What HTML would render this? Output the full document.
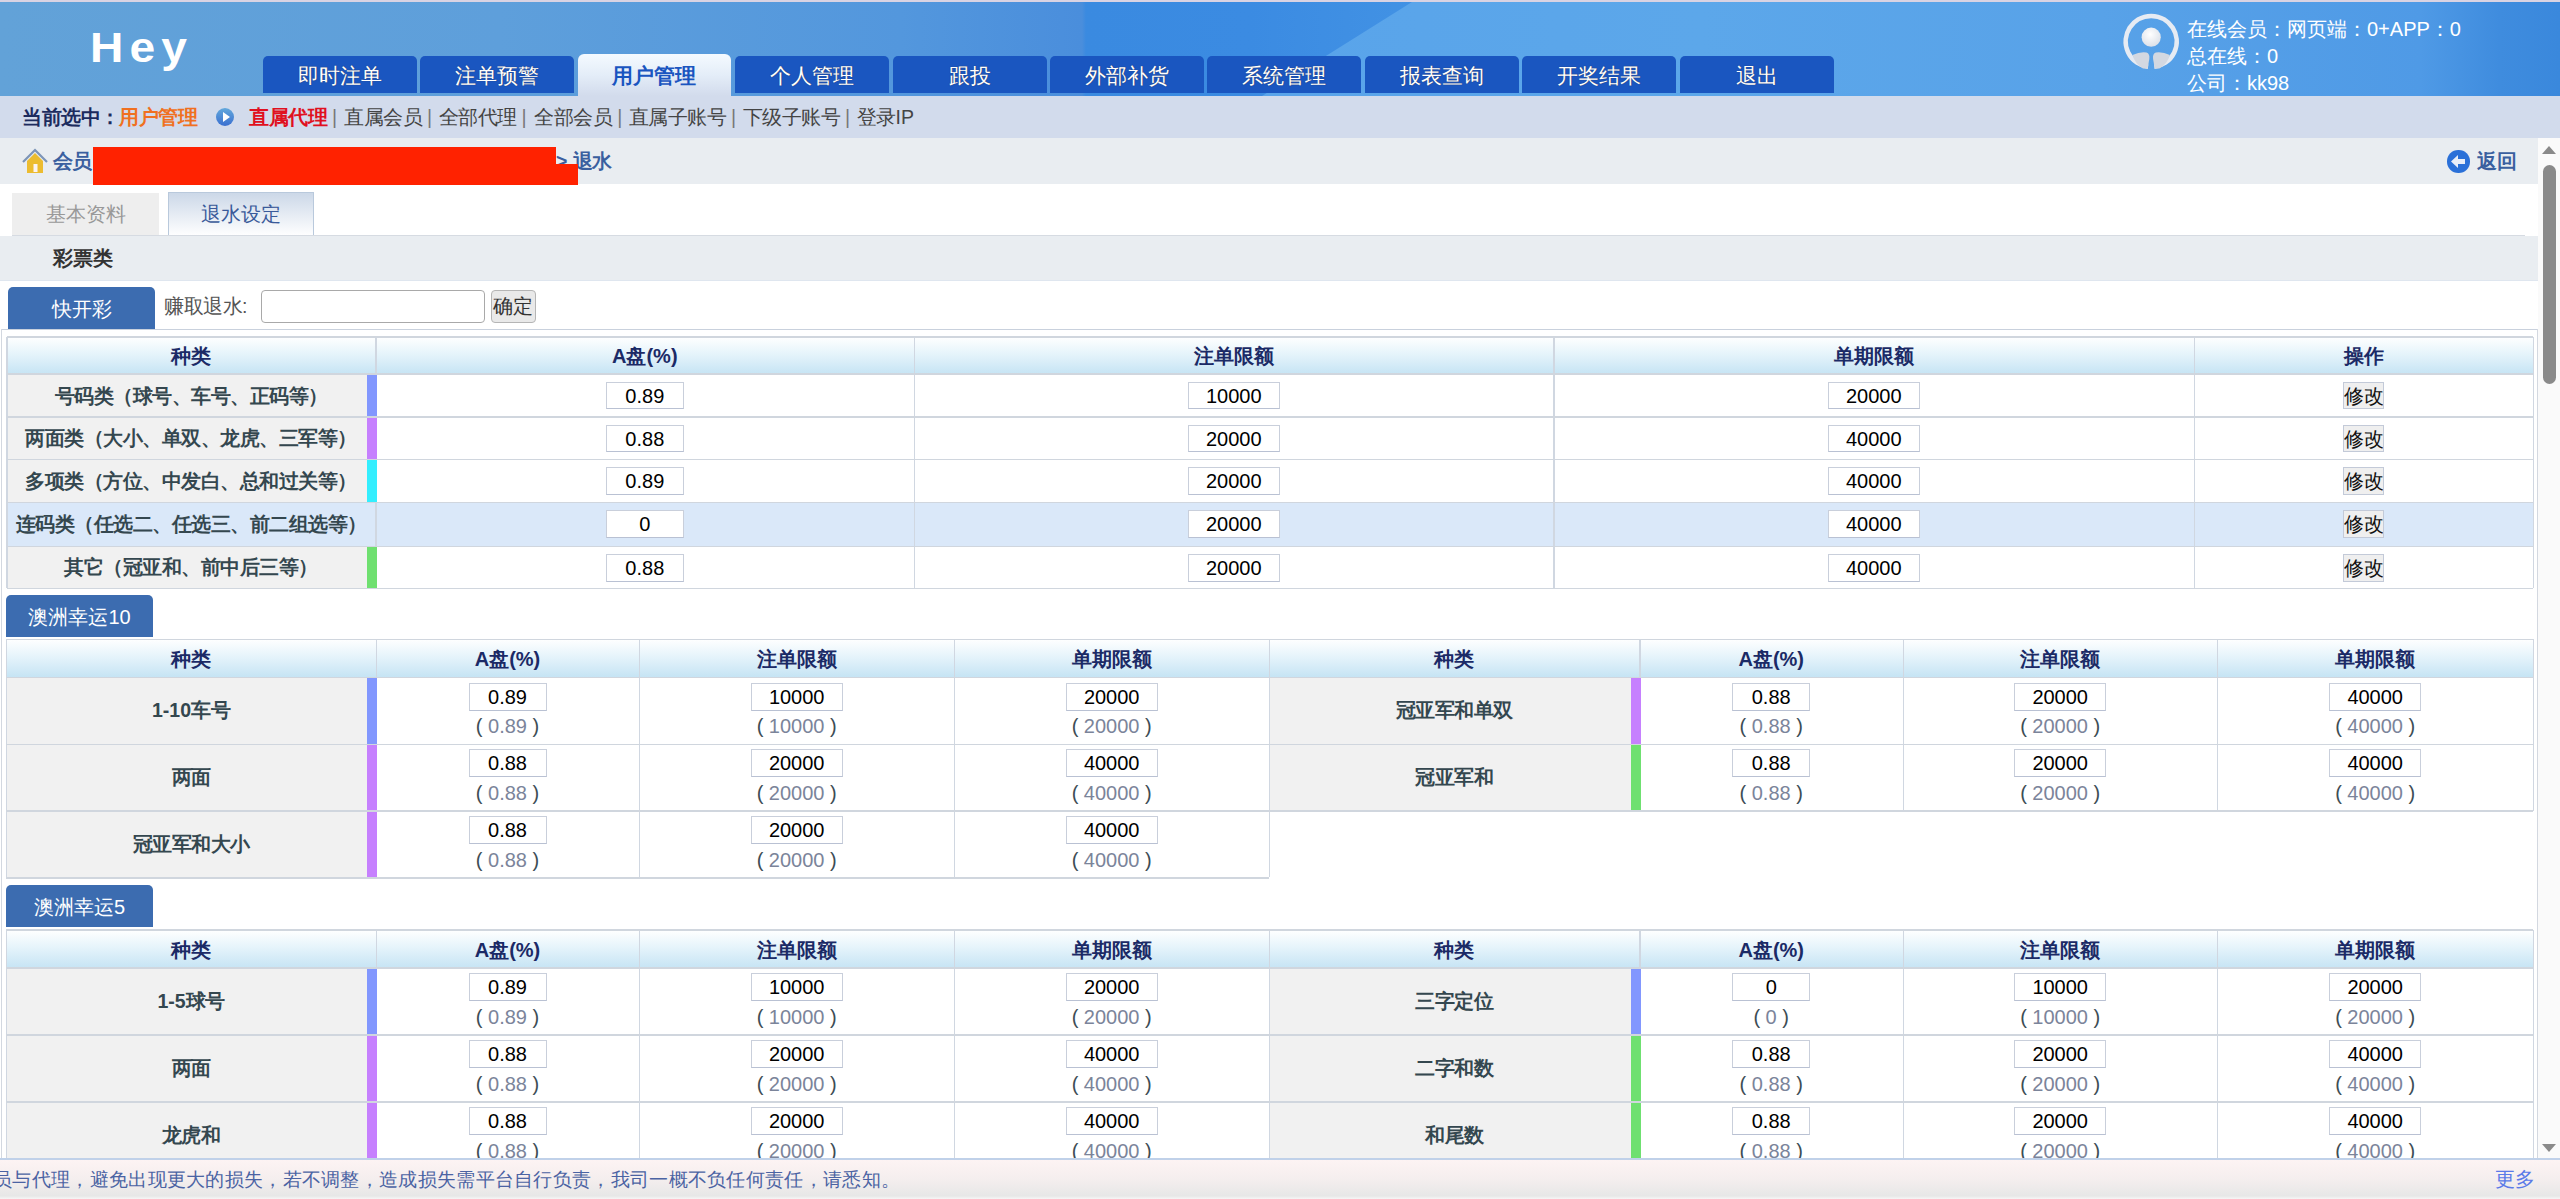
<!DOCTYPE html><html><head><meta charset="utf-8"><title>退水设定</title><style>
*{margin:0;padding:0;box-sizing:border-box}
html,body{width:2560px;height:1199px;overflow:hidden;background:#fff}
body{position:relative;font-family:"Liberation Sans",sans-serif;font-size:20px;color:#333}
div{position:absolute}
em{font-style:normal;display:inline-block;width:1em;text-align:center}
.nocjk em{-webkit-text-fill-color:transparent;text-shadow:none;position:relative}
.nocjk em:after{content:"";position:absolute;left:.09em;right:.09em;top:50%;height:.82em;margin-top:-.43em;background:currentColor;opacity:.45}
.nocjk .b em:after,.nocjk .th em:after,.nocjk .ct em:after{opacity:.72}
.nocjk em.p:after{display:none}
.c{text-align:center;white-space:nowrap}
.b{font-weight:bold}
.tab{background:#1a56c0;border-radius:5px 5px 0 0;color:#fff;text-align:center;line-height:40px;font-size:21px;text-shadow:0 0 1px #334}
.hd{background:linear-gradient(#ffffff 0%,#e6f4fb 45%,#c6e4f4 100%)}
.th{color:#1b2a66;font-weight:bold;text-align:center;white-space:nowrap}
.cat{background:#f1f1f1}
.ct{color:#34474f;font-weight:bold;text-align:center;white-space:nowrap}
.inp{background:#fff;border:1px solid #c9cfdb;border-bottom-color:#b9c1d3;color:#000;text-align:center;white-space:nowrap}
.sub{color:#7b849a;text-align:center;white-space:nowrap}
.sub i{font-style:normal;color:#3d4d55}
.vl{background:#d0d7e1}
.hl{background:#d0d6de}
.btn{background:#3c6cb0;border-radius:5px 5px 0 0;color:#fff;text-align:center;white-space:nowrap}
</style></head><body>
<div style="left:0.0px;top:0.0px;width:2560.0px;height:2.0px;background:#d9d3e3"></div>
<div style="left:0.0px;top:2.0px;width:2560.0px;height:94.0px;background:linear-gradient(90deg,#62a2d8 0px,#5e9fdb 500px,#5397dd 900px,#4a8edc 1082px,#3a8ae0 1086px,#3b8be2 1250px,#4292e4 1419px)"></div>
<div style="left:0.0px;top:2.0px;width:2560.0px;height:94.0px;clip-path:polygon(1412px 0,100% 0,100% 100%,1262px 100%);background:linear-gradient(90deg,#59a4ea 1280px,#5ca7ea 1700px,#58a2e8 2100px,#4f9ae6 2420px,#3f8cde 2500px,#3a88dc 2560px)"></div>
<div style="left:89.6px;top:23px;font-size:42px;font-weight:bold;color:#fff;letter-spacing:5.5px;line-height:50px;transform:scaleX(1.1);transform-origin:0 0">Hey</div>
<div class="tab" style="left:263.0px;top:55.5px;width:154px;height:37.5px"><em>即</em><em>时</em><em>注</em><em>单</em></div>
<div class="tab" style="left:420.4px;top:55.5px;width:154px;height:37.5px"><em>注</em><em>单</em><em>预</em><em>警</em></div>
<div style="left:577.8px;top:54px;width:153px;height:42px;border-radius:6px 6px 0 0;background:linear-gradient(#f4faff 0%,#e4edf8 50%,#d2dbec 100%);color:#1a55c0;font-weight:bold;text-align:center;line-height:44px;font-size:21px"><em>用</em><em>户</em><em>管</em><em>理</em></div>
<div class="tab" style="left:735.2px;top:55.5px;width:154px;height:37.5px"><em>个</em><em>人</em><em>管</em><em>理</em></div>
<div class="tab" style="left:892.6px;top:55.5px;width:154px;height:37.5px"><em>跟</em><em>投</em></div>
<div class="tab" style="left:1050.0px;top:55.5px;width:154px;height:37.5px"><em>外</em><em>部</em><em>补</em><em>货</em></div>
<div class="tab" style="left:1207.4px;top:55.5px;width:154px;height:37.5px"><em>系</em><em>统</em><em>管</em><em>理</em></div>
<div class="tab" style="left:1364.8px;top:55.5px;width:154px;height:37.5px"><em>报</em><em>表</em><em>查</em><em>询</em></div>
<div class="tab" style="left:1522.2px;top:55.5px;width:154px;height:37.5px"><em>开</em><em>奖</em><em>结</em><em>果</em></div>
<div class="tab" style="left:1679.6px;top:55.5px;width:154px;height:37.5px"><em>退</em><em>出</em></div>
<svg style="position:absolute;left:2115px;top:8px" width="72" height="72" viewBox="0 0 72 72"><defs><radialGradient id="hg" cx="45%" cy="35%" r="70%"><stop offset="0" stop-color="#ffffff"/><stop offset="1" stop-color="#d9dee7"/></radialGradient></defs><path d="M33.1 58.8 A25.5 25.5 0 1 1 39.3 58.8" fill="none" stroke="#e6ebf3" stroke-width="4.6"/><circle cx="36.2" cy="29.2" r="9.6" fill="url(#hg)"/><path d="M17.5 47 Q25 43.5 31.5 44.5 Q35 45.5 34.3 51 Q33.5 56 32.5 60.7 L28 60.5 Q20 56 17.5 47 Z" fill="#d3d8e1"/><path d="M54.9 47 Q47.4 43.5 40.9 44.5 Q37.4 45.5 38.1 51 Q38.9 56 39.9 60.7 L44.4 60.5 Q52.4 56 54.9 47 Z" fill="#d3d8e1"/></svg>
<div style="left:2187px;top:16px;color:#fff;font-size:20px;line-height:27px;white-space:nowrap"><em>在</em><em>线</em><em>会</em><em>员</em><em class="p">：</em><em>网</em><em>页</em><em>端</em><em class="p">：</em>0+APP<em class="p">：</em>0<br><em>总</em><em>在</em><em>线</em><em class="p">：</em>0<br><em>公</em><em>司</em><em class="p">：</em>kk98</div>
<div style="left:0.0px;top:96.0px;width:2560.0px;height:42.0px;background:#d2dbec"></div>
<div style="left:22px;top:96px;height:42px;line-height:42px;font-size:19.5px;white-space:nowrap;color:#555"><span style="color:#1c2b5e;font-weight:bold"><em>当</em><em>前</em><em>选</em><em>中</em><em class="p">：</em></span></div>
<div style="left:119px;top:96px;height:42px;line-height:42px;font-size:19.5px;white-space:nowrap;color:#f07020;font-weight:bold"><em>用</em><em>户</em><em>管</em><em>理</em></div>
<div style="left:215.5px;top:107.5px;width:18px;height:18px;border-radius:50%;background:linear-gradient(#62a8dc,#3a6fd0)"></div>
<div style="left:222.5px;top:111.5px;width:0;height:0;border-left:7px solid #fff;border-top:5px solid transparent;border-bottom:5px solid transparent"></div>
<div style="left:249px;top:96px;height:42px;line-height:42px;font-size:19.5px;white-space:nowrap;color:#e01020;font-weight:bold"><em>直</em><em>属</em><em>代</em><em>理</em></div>
<div style="left:332px;top:96px;height:42px;line-height:42px;font-size:19.5px;white-space:nowrap;color:#777">|</div>
<div style="left:344px;top:96px;height:42px;line-height:42px;font-size:19.5px;white-space:nowrap;color:#444"><em>直</em><em>属</em><em>会</em><em>员</em></div>
<div style="left:427px;top:96px;height:42px;line-height:42px;font-size:19.5px;white-space:nowrap;color:#777">|</div>
<div style="left:438.7px;top:96px;height:42px;line-height:42px;font-size:19.5px;white-space:nowrap;color:#444"><em>全</em><em>部</em><em>代</em><em>理</em></div>
<div style="left:521.6px;top:96px;height:42px;line-height:42px;font-size:19.5px;white-space:nowrap;color:#777">|</div>
<div style="left:534px;top:96px;height:42px;line-height:42px;font-size:19.5px;white-space:nowrap;color:#444"><em>全</em><em>部</em><em>会</em><em>员</em></div>
<div style="left:617.3px;top:96px;height:42px;line-height:42px;font-size:19.5px;white-space:nowrap;color:#777">|</div>
<div style="left:628.8px;top:96px;height:42px;line-height:42px;font-size:19.5px;white-space:nowrap;color:#444"><em>直</em><em>属</em><em>子</em><em>账</em><em>号</em></div>
<div style="left:731px;top:96px;height:42px;line-height:42px;font-size:19.5px;white-space:nowrap;color:#777">|</div>
<div style="left:742.6px;top:96px;height:42px;line-height:42px;font-size:19.5px;white-space:nowrap;color:#444"><em>下</em><em>级</em><em>子</em><em>账</em><em>号</em></div>
<div style="left:845px;top:96px;height:42px;line-height:42px;font-size:19.5px;white-space:nowrap;color:#777">|</div>
<div style="left:856.5px;top:96px;height:42px;line-height:42px;font-size:19.5px;white-space:nowrap;color:#444"><em>登</em><em>录</em>IP</div>
<div style="left:0.0px;top:138.0px;width:2538.0px;height:46.0px;background:#e9edf1"></div>
<svg style="position:absolute;left:22px;top:148px" width="26" height="27" viewBox="0 0 26 27"><polygon points="5,13 13,5 21,13 21,25 5,25" fill="#ecbc30"/><rect x="11.5" y="16" width="4" height="8" fill="#fbf3f3"/><polyline points="1,14 13,2 25,14" fill="none" stroke="#7d95b8" stroke-width="2.2"/></svg>
<div class="b" style="left:52.5px;top:138px;height:46px;line-height:46px;color:#3a5f9f;font-size:19.5px"><em>会</em><em>员</em></div>
<div class="b" style="left:556px;top:138px;height:46px;line-height:46px;color:#3a5f9f;font-size:19.5px;white-space:nowrap">&gt; <em>退</em><em>水</em></div>
<div style="left:92.5px;top:147.0px;width:463.5px;height:38.0px;background:#ff2200"></div>
<div style="left:556.0px;top:164.0px;width:22.0px;height:21.0px;background:#ff2200"></div>
<div style="left:2447px;top:150px;width:22.5px;height:22.5px;border-radius:50%;background:#2a70d8"></div>
<svg style="position:absolute;left:2447px;top:150px" width="23" height="23" viewBox="0 0 23 23"><polygon points="4,11.5 11,5 11,9 18,9 18,14 11,14 11,18" fill="#e8eef8"/></svg>
<div class="b" style="left:2477px;top:138px;height:46px;line-height:46px;color:#3a5f9f;font-size:19.5px"><em>返</em><em>回</em></div>
<div style="left:2538.0px;top:138.0px;width:22.0px;height:1020.0px;background:#fafafa"></div>
<div style="left:2541.5px;top:146px;width:0;height:0;border-left:7.5px solid transparent;border-right:7.5px solid transparent;border-bottom:8px solid #8a8a8a"></div>
<div style="left:2543.0px;top:165.0px;width:13.0px;height:219.0px;background:#8a8a8a;border-radius:7px"></div>
<div style="left:2541.5px;top:1144px;width:0;height:0;border-left:7.5px solid transparent;border-right:7.5px solid transparent;border-top:8px solid #8a8a8a"></div>
<div style="left:12.0px;top:192.5px;width:147.0px;height:42.5px;background:#eeeeee;color:#999;text-align:center;line-height:42px;font-size:20px"><em>基</em><em>本</em><em>资</em><em>料</em></div>
<div style="left:167.5px;top:192.0px;width:146.5px;height:44.0px;background:linear-gradient(#ccd8e8,#ffffff);border:1px solid #b9c9dc;border-bottom:none;color:#3a5a9a;text-align:center;line-height:42px;font-size:20px"><em>退</em><em>水</em><em>设</em><em>定</em></div>
<div style="left:12.0px;top:235.0px;width:2513.0px;height:1.0px;background:#d6dbe2"></div>
<div style="left:0.0px;top:236.0px;width:2538.0px;height:44.0px;background:#e9edf1"></div>
<div style="left:0.0px;top:280.0px;width:2538.0px;height:1.0px;background:#dfe6ef"></div>
<div class="b" style="left:52.5px;top:236px;height:44px;line-height:44px;color:#333;font-size:20px"><em>彩</em><em>票</em><em>类</em></div>
<div class="btn" style="left:8.0px;top:287.0px;width:147.0px;height:42.0px;line-height:44px;font-size:20px"><em>快</em><em>开</em><em>彩</em></div>
<div style="left:164px;top:290px;height:33px;line-height:33px;color:#555;font-size:19.5px;white-space:nowrap"><em>赚</em><em>取</em><em>退</em><em>水</em>:</div>
<div style="left:260.5px;top:290.0px;width:224.5px;height:32.5px;border:1.5px solid #a9a9a9;border-radius:4px;background:#fff"></div>
<div style="left:490.5px;top:290.0px;width:45.5px;height:32.5px;border:1.5px solid #b5b5b5;border-radius:4px;background:#e9e9e9;color:#333;text-align:center;line-height:30px;font-size:20px"><em>确</em><em>定</em></div>
<div style="left:0.5px;top:329.0px;width:2537.5px;height:1.0px;background:#c9d1dd"></div>
<div style="left:0.5px;top:329.0px;width:1.5px;height:829.0px;background:#d3d8e0"></div>
<div style="left:2536.5px;top:329.0px;width:1.5px;height:829.0px;background:#d3d8e0"></div>
<div class="hd" style="left:6.5px;top:336.5px;width:2526.5px;height:37.0px;"></div>
<div class="cat" style="left:6.5px;top:373.5px;width:369.1px;height:43.0px;"></div>
<div class="cat" style="left:6.5px;top:416.5px;width:369.1px;height:42.5px;"></div>
<div class="cat" style="left:6.5px;top:459.0px;width:369.1px;height:43.3px;"></div>
<div style="left:6.5px;top:502.3px;width:2526.5px;height:43.7px;background:#dae8f9"></div>
<div class="cat" style="left:6.5px;top:546.0px;width:369.1px;height:42.0px;"></div>
<div class="vl" style="left:6.0px;top:336.5px;width:1.5px;height:251.5px;"></div>
<div class="vl" style="left:375.1px;top:336.5px;width:1.5px;height:251.5px;"></div>
<div class="vl" style="left:913.5px;top:336.5px;width:1.5px;height:251.5px;"></div>
<div class="vl" style="left:1553.0px;top:336.5px;width:1.5px;height:251.5px;"></div>
<div class="vl" style="left:2193.5px;top:336.5px;width:1.5px;height:251.5px;"></div>
<div class="vl" style="left:2532.5px;top:336.5px;width:1.5px;height:251.5px;"></div>
<div style="left:366.6px;top:373.5px;width:10.0px;height:43.0px;background:#8297fe"></div>
<div style="left:366.6px;top:416.5px;width:10.0px;height:42.5px;background:#c680fe"></div>
<div style="left:366.6px;top:459.0px;width:10.0px;height:43.3px;background:#33eefe"></div>
<div style="left:366.6px;top:546.0px;width:10.0px;height:42.0px;background:#6fe070"></div>
<div class="hl" style="left:6.5px;top:336.0px;width:2526.5px;height:1.5px;"></div>
<div class="hl" style="left:6.5px;top:373.0px;width:2526.5px;height:1.5px;"></div>
<div class="hl" style="left:6.5px;top:416.0px;width:2526.5px;height:1.5px;"></div>
<div class="hl" style="left:6.5px;top:458.5px;width:2526.5px;height:1.5px;"></div>
<div class="hl" style="left:6.5px;top:501.8px;width:2526.5px;height:1.5px;"></div>
<div class="hl" style="left:6.5px;top:545.5px;width:2526.5px;height:1.5px;"></div>
<div class="hl" style="left:6.5px;top:587.5px;width:2526.5px;height:1.5px;"></div>
<div class="th" style="left:6.5px;top:336.5px;width:369.1px;height:37px;line-height:39px"><em>种</em><em>类</em></div>
<div class="th" style="left:375.6px;top:336.5px;width:538.4px;height:37px;line-height:39px">A<em>盘</em>(%)</div>
<div class="th" style="left:914.0px;top:336.5px;width:639.5px;height:37px;line-height:39px"><em>注</em><em>单</em><em>限</em><em>额</em></div>
<div class="th" style="left:1553.5px;top:336.5px;width:640.5px;height:37px;line-height:39px"><em>单</em><em>期</em><em>限</em><em>额</em></div>
<div class="th" style="left:2194.0px;top:336.5px;width:339.0px;height:37px;line-height:39px"><em>操</em><em>作</em></div>
<div class="ct" style="left:6.5px;top:373.5px;width:369.1px;height:43.0px;line-height:44.0px;font-size:19.5px"><em>号</em><em>码</em><em>类</em><em class="p">（</em><em>球</em><em>号</em><em class="p">、</em><em>车</em><em>号</em><em class="p">、</em><em>正</em><em>码</em><em>等</em><em class="p">）</em></div>
<div class="inp" style="left:605.8px;top:381.5px;width:78.0px;height:27.5px;line-height:26px;font-size:20px">0.89</div>
<div class="inp" style="left:1187.8px;top:381.5px;width:92.0px;height:27.5px;line-height:26px;font-size:20px">10000</div>
<div class="inp" style="left:1827.8px;top:381.5px;width:92.0px;height:27.5px;line-height:26px;font-size:20px">20000</div>
<div style="left:2343.0px;top:381.5px;width:41.0px;height:27.5px;background:#efefef;border:1px solid #c3cad8;color:#111;text-align:center;line-height:26px;font-size:20px;white-space:nowrap;overflow:hidden"><em>修</em><em>改</em></div>
<div class="ct" style="left:6.5px;top:416.5px;width:369.1px;height:42.5px;line-height:43.5px;font-size:19.5px"><em>两</em><em>面</em><em>类</em><em class="p">（</em><em>大</em><em>小</em><em class="p">、</em><em>单</em><em>双</em><em class="p">、</em><em>龙</em><em>虎</em><em class="p">、</em><em>三</em><em>军</em><em>等</em><em class="p">）</em></div>
<div class="inp" style="left:605.8px;top:424.5px;width:78.0px;height:27.5px;line-height:26px;font-size:20px">0.88</div>
<div class="inp" style="left:1187.8px;top:424.5px;width:92.0px;height:27.5px;line-height:26px;font-size:20px">20000</div>
<div class="inp" style="left:1827.8px;top:424.5px;width:92.0px;height:27.5px;line-height:26px;font-size:20px">40000</div>
<div style="left:2343.0px;top:424.5px;width:41.0px;height:27.5px;background:#efefef;border:1px solid #c3cad8;color:#111;text-align:center;line-height:26px;font-size:20px;white-space:nowrap;overflow:hidden"><em>修</em><em>改</em></div>
<div class="ct" style="left:6.5px;top:459.0px;width:369.1px;height:43.3px;line-height:44.3px;font-size:19.5px"><em>多</em><em>项</em><em>类</em><em class="p">（</em><em>方</em><em>位</em><em class="p">、</em><em>中</em><em>发</em><em>白</em><em class="p">、</em><em>总</em><em>和</em><em>过</em><em>关</em><em>等</em><em class="p">）</em></div>
<div class="inp" style="left:605.8px;top:467.0px;width:78.0px;height:27.5px;line-height:26px;font-size:20px">0.89</div>
<div class="inp" style="left:1187.8px;top:467.0px;width:92.0px;height:27.5px;line-height:26px;font-size:20px">20000</div>
<div class="inp" style="left:1827.8px;top:467.0px;width:92.0px;height:27.5px;line-height:26px;font-size:20px">40000</div>
<div style="left:2343.0px;top:467.0px;width:41.0px;height:27.5px;background:#efefef;border:1px solid #c3cad8;color:#111;text-align:center;line-height:26px;font-size:20px;white-space:nowrap;overflow:hidden"><em>修</em><em>改</em></div>
<div class="ct" style="left:6.5px;top:502.3px;width:369.1px;height:43.7px;line-height:44.7px;font-size:19.5px"><em>连</em><em>码</em><em>类</em><em class="p">（</em><em>任</em><em>选</em><em>二</em><em class="p">、</em><em>任</em><em>选</em><em>三</em><em class="p">、</em><em>前</em><em>二</em><em>组</em><em>选</em><em>等</em><em class="p">）</em></div>
<div class="inp" style="left:605.8px;top:510.3px;width:78.0px;height:27.5px;line-height:26px;font-size:20px">0</div>
<div class="inp" style="left:1187.8px;top:510.3px;width:92.0px;height:27.5px;line-height:26px;font-size:20px">20000</div>
<div class="inp" style="left:1827.8px;top:510.3px;width:92.0px;height:27.5px;line-height:26px;font-size:20px">40000</div>
<div style="left:2343.0px;top:510.3px;width:41.0px;height:27.5px;background:#efefef;border:1px solid #c3cad8;color:#111;text-align:center;line-height:26px;font-size:20px;white-space:nowrap;overflow:hidden"><em>修</em><em>改</em></div>
<div class="ct" style="left:6.5px;top:546.0px;width:369.1px;height:42.0px;line-height:43.0px;font-size:19.5px"><em>其</em><em>它</em><em class="p">（</em><em>冠</em><em>亚</em><em>和</em><em class="p">、</em><em>前</em><em>中</em><em>后</em><em>三</em><em>等</em><em class="p">）</em></div>
<div class="inp" style="left:605.8px;top:554.0px;width:78.0px;height:27.5px;line-height:26px;font-size:20px">0.88</div>
<div class="inp" style="left:1187.8px;top:554.0px;width:92.0px;height:27.5px;line-height:26px;font-size:20px">20000</div>
<div class="inp" style="left:1827.8px;top:554.0px;width:92.0px;height:27.5px;line-height:26px;font-size:20px">40000</div>
<div style="left:2343.0px;top:554.0px;width:41.0px;height:27.5px;background:#efefef;border:1px solid #c3cad8;color:#111;text-align:center;line-height:26px;font-size:20px;white-space:nowrap;overflow:hidden"><em>修</em><em>改</em></div>
<div class="btn" style="left:6.0px;top:595.0px;width:147.0px;height:42.0px;line-height:44px;font-size:20px"><em>澳</em><em>洲</em><em>幸</em><em>运</em>10</div>
<div class="hd" style="left:6.0px;top:639.3px;width:2527.0px;height:38.1px;"></div>
<div class="cat" style="left:6.0px;top:677.4px;width:370.0px;height:66.7px;"></div>
<div class="cat" style="left:6.0px;top:744.1px;width:370.0px;height:66.7px;"></div>
<div class="cat" style="left:6.0px;top:810.8px;width:370.0px;height:66.7px;"></div>
<div class="cat" style="left:1269.0px;top:677.4px;width:370.5px;height:66.7px;"></div>
<div class="cat" style="left:1269.0px;top:744.1px;width:370.5px;height:66.7px;"></div>
<div class="vl" style="left:5.5px;top:639.3px;width:1.5px;height:238.2px;"></div>
<div class="vl" style="left:375.5px;top:639.3px;width:1.5px;height:238.2px;"></div>
<div class="vl" style="left:638.5px;top:639.3px;width:1.5px;height:238.2px;"></div>
<div class="vl" style="left:953.9px;top:639.3px;width:1.5px;height:238.2px;"></div>
<div class="vl" style="left:1268.5px;top:639.3px;width:1.5px;height:238.2px;"></div>
<div class="vl" style="left:1639.0px;top:639.3px;width:1.5px;height:171.5px;"></div>
<div class="vl" style="left:1902.5px;top:639.3px;width:1.5px;height:171.5px;"></div>
<div class="vl" style="left:2216.9px;top:639.3px;width:1.5px;height:171.5px;"></div>
<div class="vl" style="left:2532.5px;top:639.3px;width:1.5px;height:171.5px;"></div>
<div style="left:367.0px;top:677.4px;width:10.0px;height:66.7px;background:#8297fe"></div>
<div style="left:367.0px;top:744.1px;width:10.0px;height:66.7px;background:#c680fe"></div>
<div style="left:367.0px;top:810.8px;width:10.0px;height:66.7px;background:#c680fe"></div>
<div style="left:1630.5px;top:677.4px;width:10.0px;height:66.7px;background:#c680fe"></div>
<div style="left:1630.5px;top:744.1px;width:10.0px;height:66.7px;background:#6fe070"></div>
<div class="hl" style="left:6.0px;top:638.8px;width:2527.0px;height:1.5px;"></div>
<div class="hl" style="left:6.0px;top:676.9px;width:2527.0px;height:1.5px;"></div>
<div class="hl" style="left:6.0px;top:743.6px;width:1263.0px;height:1.5px;"></div>
<div class="hl" style="left:1269.0px;top:743.6px;width:1264.0px;height:1.5px;"></div>
<div class="hl" style="left:6.0px;top:810.3px;width:1263.0px;height:1.5px;"></div>
<div class="hl" style="left:1269.0px;top:810.3px;width:1264.0px;height:1.5px;"></div>
<div class="hl" style="left:6.0px;top:877.0px;width:1263.0px;height:1.5px;"></div>
<div class="th" style="left:6.0px;top:639.3px;width:370.0px;height:38.1px;line-height:40.1px"><em>种</em><em>类</em></div>
<div class="th" style="left:376.0px;top:639.3px;width:263.0px;height:38.1px;line-height:40.1px">A<em>盘</em>(%)</div>
<div class="th" style="left:639.0px;top:639.3px;width:315.4px;height:38.1px;line-height:40.1px"><em>注</em><em>单</em><em>限</em><em>额</em></div>
<div class="th" style="left:954.4px;top:639.3px;width:314.6px;height:38.1px;line-height:40.1px"><em>单</em><em>期</em><em>限</em><em>额</em></div>
<div class="th" style="left:1269.0px;top:639.3px;width:370.5px;height:38.1px;line-height:40.1px"><em>种</em><em>类</em></div>
<div class="th" style="left:1639.5px;top:639.3px;width:263.5px;height:38.1px;line-height:40.1px">A<em>盘</em>(%)</div>
<div class="th" style="left:1903.0px;top:639.3px;width:314.4px;height:38.1px;line-height:40.1px"><em>注</em><em>单</em><em>限</em><em>额</em></div>
<div class="th" style="left:2217.4px;top:639.3px;width:315.6px;height:38.1px;line-height:40.1px"><em>单</em><em>期</em><em>限</em><em>额</em></div>
<div class="ct" style="left:6.0px;top:677.4px;width:370.0px;height:66.7px;line-height:67.7px;font-size:19.5px">1-10<em>车</em><em>号</em></div>
<div class="inp" style="left:468.5px;top:682.7px;width:78.0px;height:28.0px;line-height:27px;font-size:20px">0.89</div>
<div class="sub" style="left:447.5px;top:712.4px;width:120px;height:28px;line-height:28px;font-size:20px"><i>(</i> 0.89 <i>)</i></div>
<div class="inp" style="left:750.7px;top:682.7px;width:92.0px;height:28.0px;line-height:27px;font-size:20px">10000</div>
<div class="sub" style="left:736.7px;top:712.4px;width:120px;height:28px;line-height:28px;font-size:20px"><i>(</i> 10000 <i>)</i></div>
<div class="inp" style="left:1065.7px;top:682.7px;width:92.0px;height:28.0px;line-height:27px;font-size:20px">20000</div>
<div class="sub" style="left:1051.7px;top:712.4px;width:120px;height:28px;line-height:28px;font-size:20px"><i>(</i> 20000 <i>)</i></div>
<div class="ct" style="left:6.0px;top:744.1px;width:370.0px;height:66.7px;line-height:67.7px;font-size:19.5px"><em>两</em><em>面</em></div>
<div class="inp" style="left:468.5px;top:749.4px;width:78.0px;height:28.0px;line-height:27px;font-size:20px">0.88</div>
<div class="sub" style="left:447.5px;top:779.1px;width:120px;height:28px;line-height:28px;font-size:20px"><i>(</i> 0.88 <i>)</i></div>
<div class="inp" style="left:750.7px;top:749.4px;width:92.0px;height:28.0px;line-height:27px;font-size:20px">20000</div>
<div class="sub" style="left:736.7px;top:779.1px;width:120px;height:28px;line-height:28px;font-size:20px"><i>(</i> 20000 <i>)</i></div>
<div class="inp" style="left:1065.7px;top:749.4px;width:92.0px;height:28.0px;line-height:27px;font-size:20px">40000</div>
<div class="sub" style="left:1051.7px;top:779.1px;width:120px;height:28px;line-height:28px;font-size:20px"><i>(</i> 40000 <i>)</i></div>
<div class="ct" style="left:6.0px;top:810.8px;width:370.0px;height:66.7px;line-height:67.7px;font-size:19.5px"><em>冠</em><em>亚</em><em>军</em><em>和</em><em>大</em><em>小</em></div>
<div class="inp" style="left:468.5px;top:816.1px;width:78.0px;height:28.0px;line-height:27px;font-size:20px">0.88</div>
<div class="sub" style="left:447.5px;top:845.8px;width:120px;height:28px;line-height:28px;font-size:20px"><i>(</i> 0.88 <i>)</i></div>
<div class="inp" style="left:750.7px;top:816.1px;width:92.0px;height:28.0px;line-height:27px;font-size:20px">20000</div>
<div class="sub" style="left:736.7px;top:845.8px;width:120px;height:28px;line-height:28px;font-size:20px"><i>(</i> 20000 <i>)</i></div>
<div class="inp" style="left:1065.7px;top:816.1px;width:92.0px;height:28.0px;line-height:27px;font-size:20px">40000</div>
<div class="sub" style="left:1051.7px;top:845.8px;width:120px;height:28px;line-height:28px;font-size:20px"><i>(</i> 40000 <i>)</i></div>
<div class="ct" style="left:1269.0px;top:677.4px;width:370.5px;height:66.7px;line-height:67.7px;font-size:19.5px"><em>冠</em><em>亚</em><em>军</em><em>和</em><em>单</em><em>双</em></div>
<div class="inp" style="left:1732.2px;top:682.7px;width:78.0px;height:28.0px;line-height:27px;font-size:20px">0.88</div>
<div class="sub" style="left:1711.2px;top:712.4px;width:120px;height:28px;line-height:28px;font-size:20px"><i>(</i> 0.88 <i>)</i></div>
<div class="inp" style="left:2014.2px;top:682.7px;width:92.0px;height:28.0px;line-height:27px;font-size:20px">20000</div>
<div class="sub" style="left:2000.2px;top:712.4px;width:120px;height:28px;line-height:28px;font-size:20px"><i>(</i> 20000 <i>)</i></div>
<div class="inp" style="left:2329.2px;top:682.7px;width:92.0px;height:28.0px;line-height:27px;font-size:20px">40000</div>
<div class="sub" style="left:2315.2px;top:712.4px;width:120px;height:28px;line-height:28px;font-size:20px"><i>(</i> 40000 <i>)</i></div>
<div class="ct" style="left:1269.0px;top:744.1px;width:370.5px;height:66.7px;line-height:67.7px;font-size:19.5px"><em>冠</em><em>亚</em><em>军</em><em>和</em></div>
<div class="inp" style="left:1732.2px;top:749.4px;width:78.0px;height:28.0px;line-height:27px;font-size:20px">0.88</div>
<div class="sub" style="left:1711.2px;top:779.1px;width:120px;height:28px;line-height:28px;font-size:20px"><i>(</i> 0.88 <i>)</i></div>
<div class="inp" style="left:2014.2px;top:749.4px;width:92.0px;height:28.0px;line-height:27px;font-size:20px">20000</div>
<div class="sub" style="left:2000.2px;top:779.1px;width:120px;height:28px;line-height:28px;font-size:20px"><i>(</i> 20000 <i>)</i></div>
<div class="inp" style="left:2329.2px;top:749.4px;width:92.0px;height:28.0px;line-height:27px;font-size:20px">40000</div>
<div class="sub" style="left:2315.2px;top:779.1px;width:120px;height:28px;line-height:28px;font-size:20px"><i>(</i> 40000 <i>)</i></div>
<div class="btn" style="left:6.0px;top:885.0px;width:147.0px;height:42.0px;line-height:44px;font-size:20px"><em>澳</em><em>洲</em><em>幸</em><em>运</em>5</div>
<div class="hd" style="left:6.0px;top:929.6px;width:2527.0px;height:38.2px;"></div>
<div class="cat" style="left:6.0px;top:967.8px;width:370.0px;height:66.9px;"></div>
<div class="cat" style="left:6.0px;top:1034.7px;width:370.0px;height:66.9px;"></div>
<div class="cat" style="left:6.0px;top:1101.6px;width:370.0px;height:66.9px;"></div>
<div class="cat" style="left:1269.0px;top:967.8px;width:370.5px;height:66.9px;"></div>
<div class="cat" style="left:1269.0px;top:1034.7px;width:370.5px;height:66.9px;"></div>
<div class="cat" style="left:1269.0px;top:1101.6px;width:370.5px;height:66.9px;"></div>
<div class="vl" style="left:5.5px;top:929.6px;width:1.5px;height:238.9px;"></div>
<div class="vl" style="left:375.5px;top:929.6px;width:1.5px;height:238.9px;"></div>
<div class="vl" style="left:638.5px;top:929.6px;width:1.5px;height:238.9px;"></div>
<div class="vl" style="left:953.9px;top:929.6px;width:1.5px;height:238.9px;"></div>
<div class="vl" style="left:1268.5px;top:929.6px;width:1.5px;height:238.9px;"></div>
<div class="vl" style="left:1639.0px;top:929.6px;width:1.5px;height:238.9px;"></div>
<div class="vl" style="left:1902.5px;top:929.6px;width:1.5px;height:238.9px;"></div>
<div class="vl" style="left:2216.9px;top:929.6px;width:1.5px;height:238.9px;"></div>
<div class="vl" style="left:2532.5px;top:929.6px;width:1.5px;height:238.9px;"></div>
<div style="left:367.0px;top:967.8px;width:10.0px;height:66.9px;background:#8297fe"></div>
<div style="left:367.0px;top:1034.7px;width:10.0px;height:66.9px;background:#c680fe"></div>
<div style="left:367.0px;top:1101.6px;width:10.0px;height:66.9px;background:#c680fe"></div>
<div style="left:1630.5px;top:967.8px;width:10.0px;height:66.9px;background:#8297fe"></div>
<div style="left:1630.5px;top:1034.7px;width:10.0px;height:66.9px;background:#6fe070"></div>
<div style="left:1630.5px;top:1101.6px;width:10.0px;height:66.9px;background:#6fe070"></div>
<div class="hl" style="left:6.0px;top:929.1px;width:2527.0px;height:1.5px;"></div>
<div class="hl" style="left:6.0px;top:967.3px;width:2527.0px;height:1.5px;"></div>
<div class="hl" style="left:6.0px;top:1034.2px;width:1263.0px;height:1.5px;"></div>
<div class="hl" style="left:1269.0px;top:1034.2px;width:1264.0px;height:1.5px;"></div>
<div class="hl" style="left:6.0px;top:1101.1px;width:1263.0px;height:1.5px;"></div>
<div class="hl" style="left:1269.0px;top:1101.1px;width:1264.0px;height:1.5px;"></div>
<div class="hl" style="left:6.0px;top:1168.0px;width:1263.0px;height:1.5px;"></div>
<div class="hl" style="left:1269.0px;top:1168.0px;width:1264.0px;height:1.5px;"></div>
<div class="th" style="left:6.0px;top:929.6px;width:370.0px;height:38.2px;line-height:40.2px"><em>种</em><em>类</em></div>
<div class="th" style="left:376.0px;top:929.6px;width:263.0px;height:38.2px;line-height:40.2px">A<em>盘</em>(%)</div>
<div class="th" style="left:639.0px;top:929.6px;width:315.4px;height:38.2px;line-height:40.2px"><em>注</em><em>单</em><em>限</em><em>额</em></div>
<div class="th" style="left:954.4px;top:929.6px;width:314.6px;height:38.2px;line-height:40.2px"><em>单</em><em>期</em><em>限</em><em>额</em></div>
<div class="th" style="left:1269.0px;top:929.6px;width:370.5px;height:38.2px;line-height:40.2px"><em>种</em><em>类</em></div>
<div class="th" style="left:1639.5px;top:929.6px;width:263.5px;height:38.2px;line-height:40.2px">A<em>盘</em>(%)</div>
<div class="th" style="left:1903.0px;top:929.6px;width:314.4px;height:38.2px;line-height:40.2px"><em>注</em><em>单</em><em>限</em><em>额</em></div>
<div class="th" style="left:2217.4px;top:929.6px;width:315.6px;height:38.2px;line-height:40.2px"><em>单</em><em>期</em><em>限</em><em>额</em></div>
<div class="ct" style="left:6.0px;top:967.8px;width:370.0px;height:66.9px;line-height:67.9px;font-size:19.5px">1-5<em>球</em><em>号</em></div>
<div class="inp" style="left:468.5px;top:973.1px;width:78.0px;height:28.0px;line-height:27px;font-size:20px">0.89</div>
<div class="sub" style="left:447.5px;top:1002.8px;width:120px;height:28px;line-height:28px;font-size:20px"><i>(</i> 0.89 <i>)</i></div>
<div class="inp" style="left:750.7px;top:973.1px;width:92.0px;height:28.0px;line-height:27px;font-size:20px">10000</div>
<div class="sub" style="left:736.7px;top:1002.8px;width:120px;height:28px;line-height:28px;font-size:20px"><i>(</i> 10000 <i>)</i></div>
<div class="inp" style="left:1065.7px;top:973.1px;width:92.0px;height:28.0px;line-height:27px;font-size:20px">20000</div>
<div class="sub" style="left:1051.7px;top:1002.8px;width:120px;height:28px;line-height:28px;font-size:20px"><i>(</i> 20000 <i>)</i></div>
<div class="ct" style="left:6.0px;top:1034.7px;width:370.0px;height:66.9px;line-height:67.9px;font-size:19.5px"><em>两</em><em>面</em></div>
<div class="inp" style="left:468.5px;top:1040.0px;width:78.0px;height:28.0px;line-height:27px;font-size:20px">0.88</div>
<div class="sub" style="left:447.5px;top:1069.7px;width:120px;height:28px;line-height:28px;font-size:20px"><i>(</i> 0.88 <i>)</i></div>
<div class="inp" style="left:750.7px;top:1040.0px;width:92.0px;height:28.0px;line-height:27px;font-size:20px">20000</div>
<div class="sub" style="left:736.7px;top:1069.7px;width:120px;height:28px;line-height:28px;font-size:20px"><i>(</i> 20000 <i>)</i></div>
<div class="inp" style="left:1065.7px;top:1040.0px;width:92.0px;height:28.0px;line-height:27px;font-size:20px">40000</div>
<div class="sub" style="left:1051.7px;top:1069.7px;width:120px;height:28px;line-height:28px;font-size:20px"><i>(</i> 40000 <i>)</i></div>
<div class="ct" style="left:6.0px;top:1101.6px;width:370.0px;height:66.9px;line-height:67.9px;font-size:19.5px"><em>龙</em><em>虎</em><em>和</em></div>
<div class="inp" style="left:468.5px;top:1106.9px;width:78.0px;height:28.0px;line-height:27px;font-size:20px">0.88</div>
<div class="sub" style="left:447.5px;top:1136.6px;width:120px;height:28px;line-height:28px;font-size:20px"><i>(</i> 0.88 <i>)</i></div>
<div class="inp" style="left:750.7px;top:1106.9px;width:92.0px;height:28.0px;line-height:27px;font-size:20px">20000</div>
<div class="sub" style="left:736.7px;top:1136.6px;width:120px;height:28px;line-height:28px;font-size:20px"><i>(</i> 20000 <i>)</i></div>
<div class="inp" style="left:1065.7px;top:1106.9px;width:92.0px;height:28.0px;line-height:27px;font-size:20px">40000</div>
<div class="sub" style="left:1051.7px;top:1136.6px;width:120px;height:28px;line-height:28px;font-size:20px"><i>(</i> 40000 <i>)</i></div>
<div class="ct" style="left:1269.0px;top:967.8px;width:370.5px;height:66.9px;line-height:67.9px;font-size:19.5px"><em>三</em><em>字</em><em>定</em><em>位</em></div>
<div class="inp" style="left:1732.2px;top:973.1px;width:78.0px;height:28.0px;line-height:27px;font-size:20px">0</div>
<div class="sub" style="left:1711.2px;top:1002.8px;width:120px;height:28px;line-height:28px;font-size:20px"><i>(</i> 0 <i>)</i></div>
<div class="inp" style="left:2014.2px;top:973.1px;width:92.0px;height:28.0px;line-height:27px;font-size:20px">10000</div>
<div class="sub" style="left:2000.2px;top:1002.8px;width:120px;height:28px;line-height:28px;font-size:20px"><i>(</i> 10000 <i>)</i></div>
<div class="inp" style="left:2329.2px;top:973.1px;width:92.0px;height:28.0px;line-height:27px;font-size:20px">20000</div>
<div class="sub" style="left:2315.2px;top:1002.8px;width:120px;height:28px;line-height:28px;font-size:20px"><i>(</i> 20000 <i>)</i></div>
<div class="ct" style="left:1269.0px;top:1034.7px;width:370.5px;height:66.9px;line-height:67.9px;font-size:19.5px"><em>二</em><em>字</em><em>和</em><em>数</em></div>
<div class="inp" style="left:1732.2px;top:1040.0px;width:78.0px;height:28.0px;line-height:27px;font-size:20px">0.88</div>
<div class="sub" style="left:1711.2px;top:1069.7px;width:120px;height:28px;line-height:28px;font-size:20px"><i>(</i> 0.88 <i>)</i></div>
<div class="inp" style="left:2014.2px;top:1040.0px;width:92.0px;height:28.0px;line-height:27px;font-size:20px">20000</div>
<div class="sub" style="left:2000.2px;top:1069.7px;width:120px;height:28px;line-height:28px;font-size:20px"><i>(</i> 20000 <i>)</i></div>
<div class="inp" style="left:2329.2px;top:1040.0px;width:92.0px;height:28.0px;line-height:27px;font-size:20px">40000</div>
<div class="sub" style="left:2315.2px;top:1069.7px;width:120px;height:28px;line-height:28px;font-size:20px"><i>(</i> 40000 <i>)</i></div>
<div class="ct" style="left:1269.0px;top:1101.6px;width:370.5px;height:66.9px;line-height:67.9px;font-size:19.5px"><em>和</em><em>尾</em><em>数</em></div>
<div class="inp" style="left:1732.2px;top:1106.9px;width:78.0px;height:28.0px;line-height:27px;font-size:20px">0.88</div>
<div class="sub" style="left:1711.2px;top:1136.6px;width:120px;height:28px;line-height:28px;font-size:20px"><i>(</i> 0.88 <i>)</i></div>
<div class="inp" style="left:2014.2px;top:1106.9px;width:92.0px;height:28.0px;line-height:27px;font-size:20px">20000</div>
<div class="sub" style="left:2000.2px;top:1136.6px;width:120px;height:28px;line-height:28px;font-size:20px"><i>(</i> 20000 <i>)</i></div>
<div class="inp" style="left:2329.2px;top:1106.9px;width:92.0px;height:28.0px;line-height:27px;font-size:20px">40000</div>
<div class="sub" style="left:2315.2px;top:1136.6px;width:120px;height:28px;line-height:28px;font-size:20px"><i>(</i> 40000 <i>)</i></div>
<div style="left:0.0px;top:1158.0px;width:2560.0px;height:41.0px;background:linear-gradient(#fdf3f3 0%,#f4eeee 50%,#e7e7e7 92%,#f6f6f6 100%);border-top:2px solid #c0d1e9"></div>
<div style="left:-7px;top:1160px;height:40px;line-height:40px;color:#4b63a3;font-size:19.3px;white-space:nowrap"><em>员</em><em>与</em><em>代</em><em>理</em><em class="p">，</em><em>避</em><em>免</em><em>出</em><em>现</em><em>更</em><em>大</em><em>的</em><em>损</em><em>失</em><em class="p">，</em><em>若</em><em>不</em><em>调</em><em>整</em><em class="p">，</em><em>造</em><em>成</em><em>损</em><em>失</em><em>需</em><em>平</em><em>台</em><em>自</em><em>行</em><em>负</em><em>责</em><em class="p">，</em><em>我</em><em>司</em><em>一</em><em>概</em><em>不</em><em>负</em><em>任</em><em>何</em><em>责</em><em>任</em><em class="p">，</em><em>请</em><em>悉</em><em>知</em><em class="p">。</em></div>
<div style="left:2495px;top:1159px;height:40px;line-height:40px;color:#5a7ae8;font-size:19.6px;white-space:nowrap"><em>更</em><em>多</em></div>
<script>(function(){var s=document.createElement("span");s.style.cssText="position:absolute;left:-9999px;top:0;font-size:100px;white-space:nowrap;font-family:\"Liberation Sans\",sans-serif";s.textContent="\u4e2d\u6587";document.body.appendChild(s);var w=s.getBoundingClientRect().width;document.body.removeChild(s);if(Math.abs(w-200)>10){document.documentElement.className+=" nocjk";}})();</script>
</body></html>
